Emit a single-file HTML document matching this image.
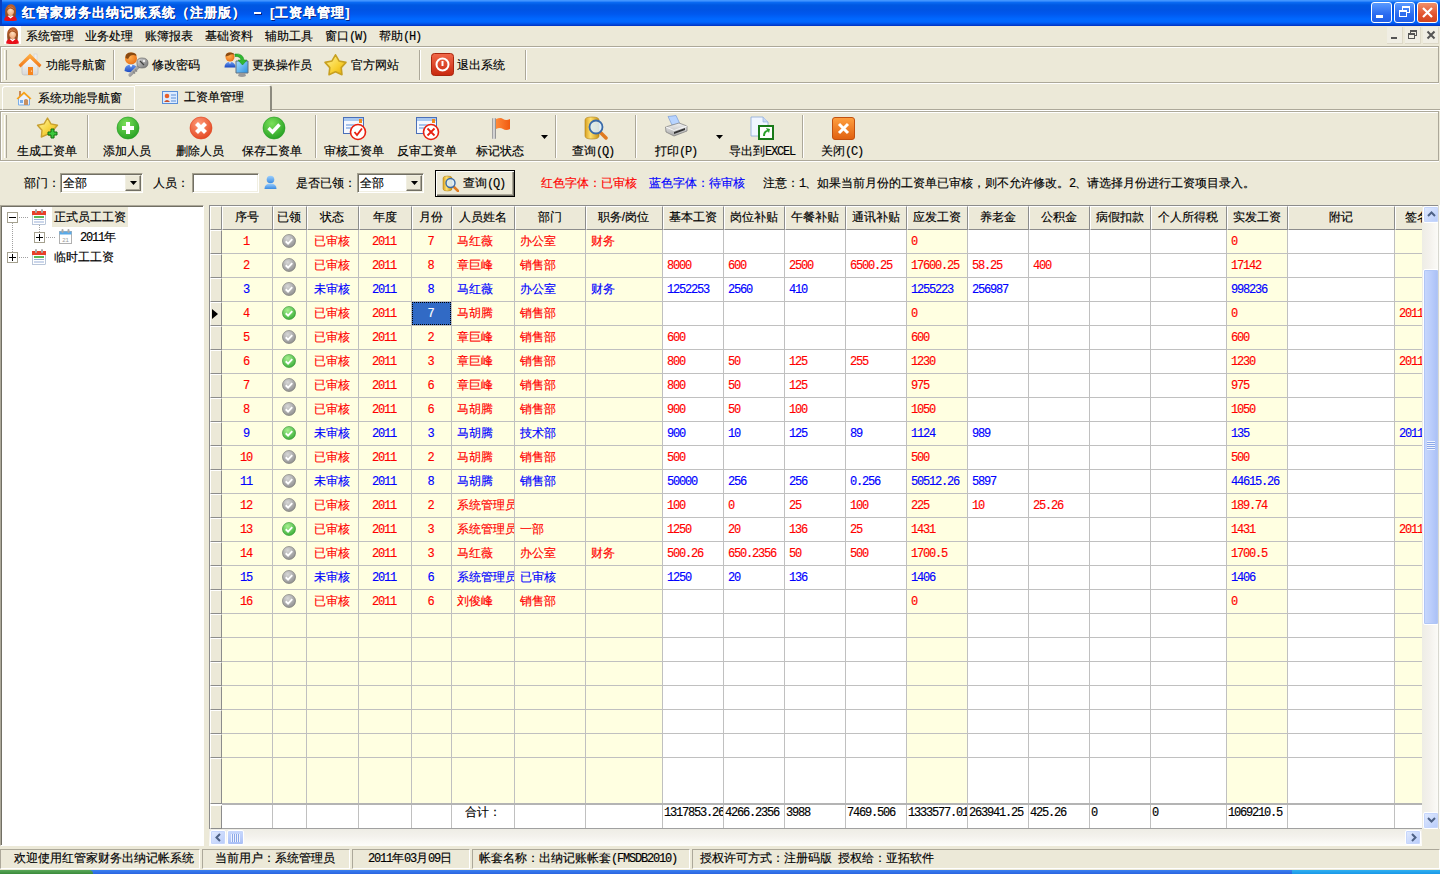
<!DOCTYPE html><html><head><meta charset="utf-8"><style>
*{box-sizing:border-box}
body{margin:0;width:1440px;height:874px;overflow:hidden;background:#ECE9D8;position:relative;font-family:"Liberation Sans",sans-serif;font-size:12px;color:#000}
.a{position:absolute}
.t{position:absolute;white-space:nowrap;line-height:12px;-webkit-text-stroke:0.15px currentColor}
.mono{font-family:"Liberation Mono",monospace;font-size:10px}
.n{font-family:"Liberation Mono",monospace;font-size:12px;letter-spacing:-1.2px}
</style></head><body>

<div class="a" style="left:0;top:0;width:1440px;height:26px;background:linear-gradient(180deg,#4A9CFF 0,#3A8EFF 1px,#0A6AF2 2.5px,#0058E2 5px,#0054E4 10px,#0058EE 14px,#0068FF 19px,#0066FF 22px,#0050E4 24px,#0030C0 26px)"></div>
<div class="a" style="left:0;top:0;width:2px;height:26px;background:#0A3FBF"></div>
<svg class="a" style="left:4px;top:4px" width="13" height="17" viewBox="0 0 13 17"><defs><linearGradient id="hair" x1="0" y1="0" x2="0" y2="1"><stop offset="0" stop-color="#C0602A"/><stop offset="1" stop-color="#8A4A20"/></linearGradient><radialGradient id="face" cx=".5" cy=".4" r=".6"><stop offset="0" stop-color="#FFE0C0"/><stop offset="1" stop-color="#F0A878"/></radialGradient></defs><path d="M1.5 13 Q0.5 6 2 3.5 Q4 0 7 0.3 Q11 0.5 11.8 4.5 Q12.5 8 11.5 13Z" fill="url(#hair)"/><ellipse cx="6.6" cy="7" rx="3.4" ry="4.2" fill="url(#face)"/><path d="M3 5 Q5 2 9 3.5 Q10.5 5 10.3 7 Q9 4.5 6 4.5 Q4 5 3 7Z" fill="url(#hair)"/><rect x="5.3" y="10" width="2.6" height="2.5" fill="#F0B088"/><path d="M0.2 16.5 Q0 12.5 4 12 L6.6 13.5 L9 12 Q13 12.5 12.8 16.5 Q6.5 17.5 0.2 16.5Z" fill="#E8101A"/><path d="M3.6 12 L6.6 14.5 L9.6 12 L8.5 11.5 L6.6 12.8 L4.7 11.5Z" fill="#fff"/></svg>
<div class="t" style="left:22px;top:6px;color:#fff;font-weight:bold;font-size:13px;line-height:14px;letter-spacing:1px;text-shadow:1px 1px 0 #0A1E7A">红管家财务出纳记账系统（注册版）</div>
<div class="a" style="left:254px;top:12px;width:7px;height:2px;background:#fff;box-shadow:1px 1px 0 #0A1E7A"></div>
<div class="t" style="left:270px;top:6px;color:#fff;font-weight:bold;font-size:13px;line-height:14px;letter-spacing:1px;text-shadow:1px 1px 0 #0A1E7A">[工资单管理]</div>
<div class="a" style="left:1371px;top:2px;width:21px;height:21px;border:1px solid #fff;border-radius:3px;background:linear-gradient(180deg,#5A9BFF,#2A6BF0 60%,#1F5FE8)"><div class="a" style="left:4px;top:12px;width:7px;height:3px;background:#fff"></div></div>
<div class="a" style="left:1394px;top:2px;width:21px;height:21px;border:1px solid #fff;border-radius:3px;background:linear-gradient(180deg,#5A9BFF,#2A6BF0 60%,#1F5FE8)"><div class="a" style="left:7px;top:3px;width:8px;height:7px;border:1px solid #fff;border-top-width:2px"></div><div class="a" style="left:4px;top:7px;width:8px;height:7px;border:1px solid #fff;border-top-width:2px;background:#2F6EEE"></div></div>
<div class="a" style="left:1417px;top:2px;width:21px;height:21px;border:1px solid #fff;border-radius:3px;background:linear-gradient(180deg,#F0906A,#E2542F 60%,#D24520)"><svg class="a" style="left:3px;top:3px" width="13" height="13"><path d="M2 2 L11 11 M11 2 L2 11" stroke="#fff" stroke-width="2.2"/></svg></div>
<div class="a" style="left:4px;top:26px;width:17px;height:18px;background:#fff"></div><svg class="a" style="left:6px;top:27px" width="13" height="17" viewBox="0 0 13 17"><defs><linearGradient id="hair" x1="0" y1="0" x2="0" y2="1"><stop offset="0" stop-color="#C0602A"/><stop offset="1" stop-color="#8A4A20"/></linearGradient><radialGradient id="face" cx=".5" cy=".4" r=".6"><stop offset="0" stop-color="#FFE0C0"/><stop offset="1" stop-color="#F0A878"/></radialGradient></defs><path d="M1.5 13 Q0.5 6 2 3.5 Q4 0 7 0.3 Q11 0.5 11.8 4.5 Q12.5 8 11.5 13Z" fill="url(#hair)"/><ellipse cx="6.6" cy="7" rx="3.4" ry="4.2" fill="url(#face)"/><path d="M3 5 Q5 2 9 3.5 Q10.5 5 10.3 7 Q9 4.5 6 4.5 Q4 5 3 7Z" fill="url(#hair)"/><rect x="5.3" y="10" width="2.6" height="2.5" fill="#F0B088"/><path d="M0.2 16.5 Q0 12.5 4 12 L6.6 13.5 L9 12 Q13 12.5 12.8 16.5 Q6.5 17.5 0.2 16.5Z" fill="#E8101A"/><path d="M3.6 12 L6.6 14.5 L9.6 12 L8.5 11.5 L6.6 12.8 L4.7 11.5Z" fill="#fff"/></svg>
<div class="t" style="left:26px;top:30px">系统管理</div>
<div class="t" style="left:85px;top:30px">业务处理</div>
<div class="t" style="left:145px;top:30px">账簿报表</div>
<div class="t" style="left:205px;top:30px">基础资料</div>
<div class="t" style="left:265px;top:30px">辅助工具</div>
<div class="t" style="left:325px;top:30px">窗口<span class="n">(W)</span></div>
<div class="t" style="left:379px;top:30px">帮助<span class="n">(H)</span></div>
<div class="a" style="left:1387px;top:27px;width:16px;height:17px;background:#F0EEE4;border-right:1px solid #DDD9C8;border-bottom:1px solid #DDD9C8"></div>
<div class="a" style="left:1405px;top:27px;width:16px;height:17px;background:#F0EEE4;border-right:1px solid #DDD9C8;border-bottom:1px solid #DDD9C8"></div>
<div class="a" style="left:1423px;top:27px;width:16px;height:17px;background:#F0EEE4;border-right:1px solid #DDD9C8;border-bottom:1px solid #DDD9C8"></div>
<div class="a" style="left:1391px;top:37px;width:6px;height:2px;background:#555"></div>
<div class="a" style="left:1410px;top:30px;width:7px;height:6px;border:1px solid #555;border-top-width:2px"></div><div class="a" style="left:1408px;top:33px;width:7px;height:6px;border:1px solid #555;border-top-width:2px;background:#F0EEE4"></div>
<svg class="a" style="left:1426px;top:30px" width="10" height="10"><path d="M1.5 1.5 L8.5 8.5 M8.5 1.5 L1.5 8.5" stroke="#555" stroke-width="2"/></svg>
<div class="a" style="left:0px;top:46px;width:1439px;height:37px;border:1px solid #ACA899;border-right-color:#ACA899;box-shadow:inset 1px 1px 0 #fff, 0 1px 0 #fff"></div>
<div class="a" style="left:4px;top:50px;width:3px;height:30px;border-left:1px solid #fff;border-right:1px solid #ACA899;"></div>
<div class="a" style="left:113px;top:50px;width:2px;height:30px;border-left:1px solid #ACA899;border-right:1px solid #fff"></div>
<div class="a" style="left:419px;top:50px;width:2px;height:30px;border-left:1px solid #ACA899;border-right:1px solid #fff"></div>
<div class="a" style="left:525px;top:50px;width:2px;height:30px;border-left:1px solid #ACA899;border-right:1px solid #fff"></div>
<svg class="a" style="left:18px;top:52px" width="24" height="24" viewBox="0 0 24 24"><defs><linearGradient id="hroof" x1="0" y1="0" x2="0" y2="1"><stop offset="0" stop-color="#FFB347"/><stop offset="1" stop-color="#F0751A"/></linearGradient><linearGradient id="hwall" x1="0" y1="0" x2="0" y2="1"><stop offset="0" stop-color="#fff"/><stop offset="1" stop-color="#D8D8D8"/></linearGradient></defs><rect x="16" y="2" width="3" height="6" fill="#eee" stroke="#ccc" stroke-width=".5"/><path d="M4 12 L12 4 L20 12 L20 21 Q20 23 18 23 L6 23 Q4 23 4 21 Z" fill="url(#hwall)" stroke="#bbb" stroke-width=".6"/><path d="M0.5 13 L12 1.5 L23.5 13 L21.5 15.5 L12 6.5 L2.5 15.5 Z" fill="url(#hroof)"/><rect x="10" y="15" width="5" height="8" fill="#F7851D"/><circle cx="13.5" cy="19" r=".6" fill="#fff"/></svg>
<div class="t" style="left:46px;top:59px">功能导航窗</div>
<svg class="a" style="left:124px;top:52px" width="25" height="25" viewBox="0 0 25 25"><defs><radialGradient id="hd" cx=".4" cy=".4" r=".7"><stop offset="0" stop-color="#FFB050"/><stop offset="1" stop-color="#E86A10"/></radialGradient><linearGradient id="bdy" x1="0" y1="0" x2="0" y2="1"><stop offset="0" stop-color="#6A9AF0"/><stop offset="1" stop-color="#1A48C0"/></linearGradient><linearGradient id="key" x1="0" y1="0" x2="1" y2="1"><stop offset="0" stop-color="#D8D8D8"/><stop offset="1" stop-color="#707070"/></linearGradient></defs><circle cx="7" cy="6.5" r="6" fill="url(#hd)"/><path d="M1.5 6 Q1 0.5 7 0.5 Q12.5 0.5 12.5 4 Q9 2 6 4 L4 7Z" fill="#8A4A10"/><path d="M0.5 19 Q0.5 12.5 7 12.5 Q12 12.5 13 16 L10 20 Q5 21 0.5 19Z" fill="url(#bdy)"/><path d="M5.5 12.8 L7 15.5 L8.5 12.8Z" fill="#fff"/><path d="M6 23 L15 14" stroke="url(#key)" stroke-width="3.2" stroke-linecap="round"/><path d="M9 19.5 L11 21.5 M11 17.5 L13 19.5" stroke="#888" stroke-width="1.5"/><path d="M13 10 Q13 6 18 6 Q24 6 24 11 Q24 16 18 16 Q13 16 13 12Z" fill="url(#key)" stroke="#666" stroke-width=".7"/><path d="M16 9 L20 13" stroke="#444" stroke-width="1.3"/><circle cx="20" cy="9" r="1.2" fill="#eee"/></svg>
<div class="t" style="left:152px;top:59px">修改密码</div>
<svg class="a" style="left:224px;top:52px" width="25" height="26" viewBox="0 0 25 26"><circle cx="6" cy="5" r="4.5" fill="url(#hd)"/><path d="M1.5 4.5 Q1.5 0.5 6 0.5 Q10.5 0.5 10.5 3 Q8 1.5 5 3.5Z" fill="#8A4A10"/><path d="M0.5 15.5 Q0.5 10 6 10 Q11.5 10 11.5 15.5Z" fill="url(#bdy)"/><path d="M5 10.2 L6 12 L7 10.2Z" fill="#fff"/><defs><linearGradient id="scr" x1="0" y1="0" x2="1" y2="1"><stop offset="0" stop-color="#A8E0FF"/><stop offset="1" stop-color="#2A90E0"/></linearGradient></defs><path d="M12 9 L24 9 L24 21 L12 21Z" fill="url(#scr)" stroke="#607080" stroke-width="1"/><path d="M15 21 L21 21 L22 24 Q18 26 14 24Z" fill="#9A9A9A"/><path d="M11 2 Q19 1 20 8 L23 8 L18.5 13 L14 8 L17 8 Q16 4 11 4.5Z" fill="#30B830" stroke="#1A8A1A" stroke-width=".5"/></svg>
<div class="t" style="left:252px;top:59px">更换操作员</div>
<svg class="a" style="left:323px;top:52px" width="25" height="25" viewBox="0 0 25 25"><defs><linearGradient id="stg" x1="0" y1="0" x2="1" y2="1"><stop offset="0" stop-color="#FFF6A0"/><stop offset=".6" stop-color="#F8D030"/><stop offset="1" stop-color="#E0A800"/></linearGradient></defs><polygon points="12.50,2.80 16.03,8.95 22.96,10.40 18.21,15.65 18.97,22.70 12.50,19.80 6.03,22.70 6.79,15.65 2.04,10.40 8.97,8.95" fill="url(#stg)" stroke="#C8A020" stroke-width="1.6" stroke-linejoin="round"/></svg>
<div class="t" style="left:351px;top:59px">官方网站</div>
<svg class="a" style="left:431px;top:53px" width="23" height="23" viewBox="0 0 23 23"><defs><linearGradient id="pwg" x1="0" y1="0" x2="0" y2="1"><stop offset="0" stop-color="#F26A4A"/><stop offset="1" stop-color="#C8280E"/></linearGradient></defs><rect x="0.5" y="0.5" width="22" height="22" rx="3" fill="url(#pwg)" stroke="#A8260E"/><circle cx="11.5" cy="11.5" r="6" fill="none" stroke="#fff" stroke-width="2"/><path d="M11.5 8 L11.5 13" stroke="#fff" stroke-width="2"/></svg>
<div class="t" style="left:457px;top:59px">退出系统</div>
<div class="a" style="left:0;top:109px;width:1440px;height:1px;background:#ACA899"></div>
<div class="a" style="left:0;top:110px;width:1440px;height:1px;background:#fff"></div>
<div class="a" style="left:2px;top:86px;width:133px;height:24px;border-left:1px solid #fff;border-top:1px solid #fff;border-radius:3px 0 0 0;border-bottom:1px solid #ACA899"></div>
<svg class="a" style="left:16px;top:90px" width="16" height="16" viewBox="0 0 16 16"><rect x="3" y="1" width="2" height="5" fill="#C98A5A"/><path d="M2.5 8 L8 3 L13.5 8 L13.5 15 L2.5 15Z" fill="#EAF2FF" stroke="#7AAEE8" stroke-width="1"/><path d="M0.5 8.5 L8 1.5 L15.5 8.5 L14 9.5 L8 4 L2 9.5Z" fill="#F7A21B"/><path d="M8 15 L8 10 Q10 8 12 10 L12 15Z" fill="#C99060"/><rect x="4" y="10" width="3" height="3" fill="#7AAEE8"/></svg>
<div class="t" style="left:38px;top:92px">系统功能导航窗</div>
<div class="a" style="left:135px;top:85px;width:137px;height:26px;background:#ECE9D8;border-top:1px solid #fff;border-right:2px solid #8C8A7E;border-radius:0 3px 0 0"></div>
<div class="a" style="left:134px;top:86px;width:1px;height:24px;background:#fff"></div>
<svg class="a" style="left:162px;top:90px" width="16" height="15" viewBox="0 0 16 15"><rect x="0.5" y="1.5" width="15" height="12" fill="#DDEBFF" stroke="#5A8FD8"/><circle cx="5" cy="6" r="2.3" fill="#E8602A"/><path d="M2 12 Q5 8 8 12Z" fill="#C8502A"/><path d="M9 5 H14 M9 8 H14 M9 11 H14" stroke="#5A8FD8" stroke-width="1"/></svg>
<div class="t" style="left:184px;top:91px">工资单管理</div>
<div class="a" style="left:0px;top:111px;width:1439px;height:50px;border:1px solid #ACA899;border-right-color:#ACA899;box-shadow:inset 1px 1px 0 #fff, 0 1px 0 #fff"></div>
<div class="a" style="left:4px;top:115px;width:3px;height:43px;border-left:1px solid #fff;border-right:1px solid #ACA899;"></div>
<div class="a" style="left:87px;top:115px;width:2px;height:43px;border-left:1px solid #ACA899;border-right:1px solid #fff"></div>
<div class="a" style="left:315px;top:115px;width:2px;height:43px;border-left:1px solid #ACA899;border-right:1px solid #fff"></div>
<div class="a" style="left:555px;top:115px;width:2px;height:43px;border-left:1px solid #ACA899;border-right:1px solid #fff"></div>
<div class="a" style="left:635px;top:115px;width:2px;height:43px;border-left:1px solid #ACA899;border-right:1px solid #fff"></div>
<div class="a" style="left:802px;top:115px;width:2px;height:43px;border-left:1px solid #ACA899;border-right:1px solid #fff"></div>
<svg class="a" style="left:36px;top:116px" width="24" height="24" viewBox="0 0 24 24"><defs><linearGradient id="stg2" x1="0" y1="0" x2="1" y2="1"><stop offset="0" stop-color="#FFF8B0"/><stop offset=".5" stop-color="#F8D848"/><stop offset="1" stop-color="#E0B010"/></linearGradient></defs><polygon points="11.50,2.00 14.91,7.81 21.49,9.26 17.02,14.29 17.67,20.99 11.50,18.30 5.33,20.99 5.98,14.29 1.51,9.26 8.09,7.81" fill="url(#stg2)" stroke="#C8A030" stroke-width="1.4" stroke-linejoin="round"/><path d="M15 13 H18 V16 H21 V19 H18 V22 H15 V19 H12 V16 H15Z" fill="#3CC83C" stroke="#107010" stroke-width="1"/></svg>
<div class="t" style="left:-13px;top:145px;width:120px;text-align:center">生成工资单</div>
<svg class="a" style="left:116px;top:116px" width="24" height="24" viewBox="0 0 24 24"><defs><radialGradient id="g7BE05A" cx=".4" cy=".3" r=".8"><stop offset="0" stop-color="#7BE05A"/><stop offset="1" stop-color="#1E9A1E"/></radialGradient></defs><circle cx="12" cy="12" r="11" fill="url(#g7BE05A)" stroke="#1E9A1E" stroke-width=".6"/><path d="M12 6 V18 M6 12 H18" stroke="#fff" stroke-width="4"/></svg>
<div class="t" style="left:67px;top:145px;width:120px;text-align:center">添加人员</div>
<svg class="a" style="left:189px;top:116px" width="24" height="24" viewBox="0 0 24 24"><defs><radialGradient id="gFF9A78" cx=".4" cy=".3" r=".8"><stop offset="0" stop-color="#FF9A78"/><stop offset="1" stop-color="#E0401A"/></radialGradient></defs><circle cx="12" cy="12" r="11" fill="url(#gFF9A78)" stroke="#E0401A" stroke-width=".6"/><path d="M7.5 7.5 L16.5 16.5 M16.5 7.5 L7.5 16.5" stroke="#fff" stroke-width="4.2"/></svg>
<div class="t" style="left:140px;top:145px;width:120px;text-align:center">删除人员</div>
<svg class="a" style="left:262px;top:116px" width="24" height="24" viewBox="0 0 24 24"><defs><radialGradient id="g7BE05A" cx=".4" cy=".3" r=".8"><stop offset="0" stop-color="#7BE05A"/><stop offset="1" stop-color="#1E9A1E"/></radialGradient></defs><circle cx="12" cy="12" r="11" fill="url(#g7BE05A)" stroke="#1E9A1E" stroke-width=".6"/><path d="M6.5 12 L10.5 16 L17.5 8.5" fill="none" stroke="#fff" stroke-width="3.4"/></svg>
<div class="t" style="left:212px;top:145px;width:120px;text-align:center">保存工资单</div>
<svg class="a" style="left:342px;top:116px" width="25" height="25" viewBox="0 0 25 25"><rect x="1.5" y="1.5" width="20" height="16" fill="#F4F8FF" stroke="#4A6FB8"/><rect x="2" y="2" width="19" height="3" fill="#A8C8F0"/><path d="M4 9 H12 M4 12 H10" stroke="#5A8FD8"/><rect x="17" y="3" width="3" height="4" fill="#F28A1A"/><circle cx="16" cy="16" r="7.5" fill="#fff" stroke="#E82010" stroke-width="1.6"/><path d="M12.5 16 L15 19 L20 12.5" fill="none" stroke="#E82010" stroke-width="1.8"/></svg>
<div class="t" style="left:294px;top:145px;width:120px;text-align:center">审核工资单</div>
<svg class="a" style="left:415px;top:116px" width="25" height="25" viewBox="0 0 25 25"><rect x="1.5" y="1.5" width="20" height="16" fill="#F4F8FF" stroke="#4A6FB8"/><rect x="2" y="2" width="19" height="3" fill="#A8C8F0"/><path d="M4 9 H12 M4 12 H10" stroke="#5A8FD8"/><rect x="17" y="3" width="3" height="4" fill="#F28A1A"/><circle cx="16" cy="16" r="7.5" fill="#fff" stroke="#E82010" stroke-width="1.6"/><path d="M12.5 12.5 L19.5 19.5 M19.5 12.5 L12.5 19.5" stroke="#E82010" stroke-width="1.8"/></svg>
<div class="t" style="left:367px;top:145px;width:120px;text-align:center">反审工资单</div>
<svg class="a" style="left:491px;top:117px" width="20" height="22" viewBox="0 0 20 22"><defs><linearGradient id="pole" x1="0" y1="0" x2="1" y2="0"><stop offset="0" stop-color="#888"/><stop offset=".5" stop-color="#eee"/><stop offset="1" stop-color="#777"/></linearGradient><linearGradient id="flg" x1="0" y1="0" x2="1" y2="0"><stop offset="0" stop-color="#FF8A3A"/><stop offset="1" stop-color="#F05A10"/></linearGradient></defs><rect x="1" y="1" width="4" height="21" rx="1" fill="url(#pole)"/><path d="M5 2 Q10 0 12 2 Q15 4 19 2 L19 12 Q15 14 12 12 Q9 10 5 12Z" fill="url(#flg)"/></svg>
<div class="t" style="left:440px;top:145px;width:120px;text-align:center">标记状态</div>
<svg class="a" style="left:541px;top:135px" width="7" height="4"><path d="M0 0 H7 L3.5 4Z" fill="#000"/></svg>
<svg class="a" style="left:584px;top:116px" width="24" height="24" viewBox="0 0 24 24"><defs><linearGradient id="cyl" x1="0" y1="0" x2="1" y2="0"><stop offset="0" stop-color="#D8A020"/><stop offset=".4" stop-color="#FFE070"/><stop offset="1" stop-color="#C89010"/></linearGradient></defs><path d="M1 4 Q1 1 8 1 Q15 1 15 4 L15 20 Q15 23 8 23 Q1 23 1 20Z" fill="url(#cyl)" stroke="#B08010" stroke-width=".6"/><path d="M16 16 L22 22" stroke="#E07A20" stroke-width="3.5" stroke-linecap="round"/><circle cx="12" cy="11" r="6.5" fill="#DDF0FF" fill-opacity=".85" stroke="#3A6AA8" stroke-width="1.8"/></svg>
<div class="t" style="left:533px;top:145px;width:120px;text-align:center">查询<span class="n">(Q)</span></div>
<svg class="a" style="left:665px;top:115px" width="23" height="22" viewBox="0 0 23 22"><defs><linearGradient id="prb" x1="0" y1="0" x2="0" y2="1"><stop offset="0" stop-color="#F4F4F4"/><stop offset="1" stop-color="#A8A8A8"/></linearGradient></defs><path d="M3 1.5 L11 0.5 L15 9 L7 10Z" fill="#B8D4FF" stroke="#6A90D0" stroke-width=".6"/><path d="M0.5 12 L14 8 L22 11 L22 16 L9 21 L1 17Z" fill="url(#prb)" stroke="#7A7A7A" stroke-width=".7"/><path d="M1 12 L9 15.5 L22 11" fill="none" stroke="#fff" stroke-width=".8"/><path d="M9 17 L20 13 L20 15 L9 19Z" fill="#333"/></svg>
<div class="t" style="left:616px;top:145px;width:120px;text-align:center">打印<span class="n">(P)</span></div>
<svg class="a" style="left:716px;top:135px" width="7" height="4"><path d="M0 0 H7 L3.5 4Z" fill="#000"/></svg>
<svg class="a" style="left:750px;top:116px" width="24" height="24" viewBox="0 0 24 24"><path d="M1 1 L13 1 L18 6 L18 20 L1 20Z" fill="#F0F6FF" stroke="#8AA8D8" stroke-width=".8"/><path d="M13 1 L13 6 L18 6" fill="#C8DAF5" stroke="#8AA8D8" stroke-width=".6"/><rect x="9" y="10" width="14" height="13" fill="#fff" stroke="#1A7A1A" stroke-width="2"/><path d="M13 20 Q13 15 17 14 L16 12 L20 13 L19 17 L18 15.5 Q15 16 15 20Z" fill="#2AA02A"/></svg>
<div class="t" style="left:702px;top:145px;width:120px;text-align:center">导出到<span class="n">EXCEL</span></div>
<svg class="a" style="left:832px;top:117px" width="23" height="23" viewBox="0 0 23 23"><defs><linearGradient id="clg" x1="0" y1="0" x2="0" y2="1"><stop offset="0" stop-color="#FFA040"/><stop offset="1" stop-color="#E06010"/></linearGradient></defs><rect x="0.5" y="0.5" width="22" height="22" rx="2.5" fill="url(#clg)" stroke="#C05010"/><path d="M7 7 L16 16 M16 7 L7 16" stroke="#fff" stroke-width="3"/></svg>
<div class="t" style="left:782px;top:145px;width:120px;text-align:center">关闭<span class="n">(C)</span></div>
<div class="t" style="left:24px;top:177px">部门：</div>
<div class="a" style="left:60px;top:173px;width:83px;height:20px;background:#fff;border:1px solid;border-color:#A5A18F #fff #fff #A5A18F;box-shadow:inset 1px 1px 0 #716F64, inset -1px -1px 0 #F1EFE2"></div><div class="t" style="left:63px;top:177px">全部</div><div class="a" style="left:125px;top:175px;width:16px;height:16px;background:#ECE9D8;border:1px solid;border-color:#F1EFE2 #716F64 #716F64 #F1EFE2;box-shadow:inset -1px -1px 0 #ACA899"></div><svg class="a" style="left:130px;top:181px" width="7" height="4"><path d="M0 0 H7 L3.5 4Z" fill="#000"/></svg>
<div class="t" style="left:153px;top:177px">人员：</div>
<div class="a" style="left:192px;top:173px;width:67px;height:20px;background:#fff;border:1px solid;border-color:#A5A18F #fff #fff #A5A18F;box-shadow:inset 1px 1px 0 #716F64, inset -1px -1px 0 #F1EFE2"></div>
<svg class="a" style="left:264px;top:175px" width="13" height="14" viewBox="0 0 13 14"><defs><linearGradient id="psg" x1="0" y1="0" x2="0" y2="1"><stop offset="0" stop-color="#9CD0FF"/><stop offset="1" stop-color="#3A8AE0"/></linearGradient></defs><circle cx="6.5" cy="4.5" r="3.8" fill="url(#psg)"/><path d="M0.5 14 Q0.5 8.5 6.5 8.5 Q12.5 8.5 12.5 14Z" fill="url(#psg)"/></svg>
<div class="t" style="left:296px;top:177px">是否已领：</div>
<div class="a" style="left:357px;top:173px;width:67px;height:20px;background:#fff;border:1px solid;border-color:#A5A18F #fff #fff #A5A18F;box-shadow:inset 1px 1px 0 #716F64, inset -1px -1px 0 #F1EFE2"></div><div class="t" style="left:360px;top:177px">全部</div><div class="a" style="left:406px;top:175px;width:16px;height:16px;background:#ECE9D8;border:1px solid;border-color:#F1EFE2 #716F64 #716F64 #F1EFE2;box-shadow:inset -1px -1px 0 #ACA899"></div><svg class="a" style="left:411px;top:181px" width="7" height="4"><path d="M0 0 H7 L3.5 4Z" fill="#000"/></svg>
<div class="a" style="left:435px;top:170px;width:80px;height:27px;border:1px solid #000;background:#ECE9D8;box-shadow:inset 1px 1px 0 #fff, inset -1px -1px 0 #716F64, inset -2px -2px 0 #ACA899"></div>
<svg class="a" style="left:442px;top:175px" width="17" height="17" viewBox="0 0 17 17"><path d="M1 3 Q1 1 5.5 1 Q10 1 10 3 L10 14 Q10 16 5.5 16 Q1 16 1 14Z" fill="url(#cyl)" stroke="#B08010" stroke-width=".5"/><path d="M11 11 L16 16" stroke="#E07A20" stroke-width="2.5" stroke-linecap="round"/><circle cx="8.5" cy="8" r="4.5" fill="#DDF0FF" fill-opacity=".85" stroke="#3A6AA8" stroke-width="1.4"/></svg>
<div class="t" style="left:463px;top:177px">查询<span class="n">(Q)</span></div>
<div class="t" style="left:541px;top:177px;color:#FF0000">红色字体：已审核</div>
<div class="t" style="left:649px;top:177px;color:#0000FF">蓝色字体：待审核</div>
<div class="t" style="left:763px;top:177px">注意：<span class="n">1</span>、如果当前月份的工资单已审核，则不允许修改。<span class="n">2</span>、请选择月份进行工资项目录入。</div>
<div class="a" style="left:0;top:205px;width:204px;height:641px;background:#fff;border:1px solid;border-color:#ACA899 #fff #fff #ACA899;box-shadow:inset 1px 1px 0 #716F64"></div>
<div class="a" style="left:12px;top:223px;width:1px;height:29px;background:repeating-linear-gradient(180deg,#A0A0A0 0 1px,transparent 1px 2px)"></div>
<div class="a" style="left:7px;top:212px;width:11px;height:11px;border:1px solid #A5A18F;background:#fff"></div><div class="a" style="left:9px;top:217px;width:7px;height:1px;background:#000"></div>
<div class="a" style="left:19px;top:217px;width:9px;height:1px;background:repeating-linear-gradient(90deg,#A0A0A0 0 1px,transparent 1px 2px)"></div>
<svg class="a" style="left:32px;top:209px" width="14" height="16" viewBox="0 0 14 16"><rect x="0.5" y="2.5" width="13" height="13" fill="#fff" stroke="#8AA0C0" stroke-width=".6"/><rect x="0" y="2" width="14" height="4" fill="#E8402A"/><rect x="2" y="7" width="10" height="2" fill="#58B858"/><path d="M2 10.5 H12 M2 13 H12" stroke="#9AB0D8" stroke-width="1.2"/><rect x="3" y="0" width="2" height="4" rx="1" fill="#aaa"/><rect x="9" y="0" width="2" height="4" rx="1" fill="#aaa"/></svg>
<div class="a" style="left:52px;top:207px;width:76px;height:20px;background:#ECE9D8"></div>
<div class="t" style="left:54px;top:211px">正式员工工资</div>
<div class="a" style="left:39px;top:225px;width:1px;height:7px;background:repeating-linear-gradient(180deg,#A0A0A0 0 1px,transparent 1px 2px)"></div>
<div class="a" style="left:34px;top:232px;width:11px;height:11px;border:1px solid #A5A18F;background:#fff"></div><div class="a" style="left:36px;top:237px;width:7px;height:1px;background:#000"></div><div class="a" style="left:39px;top:234px;width:1px;height:7px;background:#000"></div>
<div class="a" style="left:46px;top:237px;width:9px;height:1px;background:repeating-linear-gradient(90deg,#A0A0A0 0 1px,transparent 1px 2px)"></div>
<svg class="a" style="left:59px;top:229px" width="13" height="15" viewBox="0 0 13 15"><rect x="0.5" y="2.5" width="12" height="12" fill="#fff" stroke="#B0B0B0"/><rect x="0.5" y="2.5" width="12" height="3" fill="#5AAAE8"/><rect x="2.5" y="0" width="2" height="4" rx="1" fill="#aaa"/><rect x="8.5" y="0" width="2" height="4" rx="1" fill="#aaa"/><text x="6.5" y="12.5" font-size="6" text-anchor="middle" fill="#999" font-family="Liberation Sans">21</text></svg>
<div class="t" style="left:80px;top:231px"><span class="n">2011</span>年</div>
<div class="a" style="left:7px;top:252px;width:11px;height:11px;border:1px solid #A5A18F;background:#fff"></div><div class="a" style="left:9px;top:257px;width:7px;height:1px;background:#000"></div><div class="a" style="left:12px;top:254px;width:1px;height:7px;background:#000"></div>
<div class="a" style="left:19px;top:257px;width:9px;height:1px;background:repeating-linear-gradient(90deg,#A0A0A0 0 1px,transparent 1px 2px)"></div>
<svg class="a" style="left:32px;top:249px" width="14" height="16" viewBox="0 0 14 16"><rect x="0.5" y="2.5" width="13" height="13" fill="#fff" stroke="#8AA0C0" stroke-width=".6"/><rect x="0" y="2" width="14" height="4" fill="#E8402A"/><rect x="2" y="7" width="10" height="2" fill="#58B858"/><path d="M2 10.5 H12 M2 13 H12" stroke="#9AB0D8" stroke-width="1.2"/><rect x="3" y="0" width="2" height="4" rx="1" fill="#aaa"/><rect x="9" y="0" width="2" height="4" rx="1" fill="#aaa"/></svg>
<div class="t" style="left:54px;top:251px">临时工工资</div>
<div class="a" style="left:209px;top:205px;width:1213px;height:624px;overflow:hidden;background:#fff">
<div class="a" style="left:0;top:0;width:1213px;height:1px;background:#8C8C8C"></div>
<div class="a" style="left:0;top:0;width:1px;height:624px;background:#8C8C8C"></div>
<div class="a" style="left:13px;top:25px;width:50px;height:573px;background:#FFFFE1"></div>
<div class="a" style="left:64px;top:25px;width:33px;height:573px;background:#FFFFE1"></div>
<div class="a" style="left:98px;top:25px;width:51px;height:573px;background:#FFFFE1"></div>
<div class="a" style="left:150px;top:25px;width:52px;height:573px;background:#FFFFE1"></div>
<div class="a" style="left:203px;top:25px;width:39px;height:573px;background:#FFFFE1"></div>
<div class="a" style="left:243px;top:25px;width:62px;height:573px;background:#FFFFE1"></div>
<div class="a" style="left:306px;top:25px;width:70px;height:573px;background:#FFFFE1"></div>
<div class="a" style="left:377px;top:25px;width:76px;height:573px;background:#FFFFE1"></div>
<div class="a" style="left:454px;top:25px;width:60px;height:573px;background:#fff"></div>
<div class="a" style="left:515px;top:25px;width:60px;height:573px;background:#fff"></div>
<div class="a" style="left:576px;top:25px;width:60px;height:573px;background:#fff"></div>
<div class="a" style="left:637px;top:25px;width:60px;height:573px;background:#fff"></div>
<div class="a" style="left:698px;top:25px;width:60px;height:573px;background:#FFFFE1"></div>
<div class="a" style="left:759px;top:25px;width:60px;height:573px;background:#fff"></div>
<div class="a" style="left:820px;top:25px;width:60px;height:573px;background:#fff"></div>
<div class="a" style="left:881px;top:25px;width:60px;height:573px;background:#fff"></div>
<div class="a" style="left:942px;top:25px;width:75px;height:573px;background:#fff"></div>
<div class="a" style="left:1018px;top:25px;width:60px;height:573px;background:#FFFFE1"></div>
<div class="a" style="left:1079px;top:25px;width:106px;height:573px;background:#fff"></div>
<div class="a" style="left:1186px;top:25px;width:45px;height:573px;background:#FFFFE1"></div>
<div class="a" style="left:63px;top:24px;width:1px;height:600px;background:#C0C0C0"></div>
<div class="a" style="left:97px;top:24px;width:1px;height:600px;background:#C0C0C0"></div>
<div class="a" style="left:149px;top:24px;width:1px;height:600px;background:#C0C0C0"></div>
<div class="a" style="left:202px;top:24px;width:1px;height:600px;background:#C0C0C0"></div>
<div class="a" style="left:242px;top:24px;width:1px;height:600px;background:#C0C0C0"></div>
<div class="a" style="left:305px;top:24px;width:1px;height:600px;background:#C0C0C0"></div>
<div class="a" style="left:376px;top:24px;width:1px;height:600px;background:#C0C0C0"></div>
<div class="a" style="left:453px;top:24px;width:1px;height:600px;background:#C0C0C0"></div>
<div class="a" style="left:514px;top:24px;width:1px;height:600px;background:#C0C0C0"></div>
<div class="a" style="left:575px;top:24px;width:1px;height:600px;background:#C0C0C0"></div>
<div class="a" style="left:636px;top:24px;width:1px;height:600px;background:#C0C0C0"></div>
<div class="a" style="left:697px;top:24px;width:1px;height:600px;background:#C0C0C0"></div>
<div class="a" style="left:758px;top:24px;width:1px;height:600px;background:#C0C0C0"></div>
<div class="a" style="left:819px;top:24px;width:1px;height:600px;background:#C0C0C0"></div>
<div class="a" style="left:880px;top:24px;width:1px;height:600px;background:#C0C0C0"></div>
<div class="a" style="left:941px;top:24px;width:1px;height:600px;background:#C0C0C0"></div>
<div class="a" style="left:1017px;top:24px;width:1px;height:600px;background:#C0C0C0"></div>
<div class="a" style="left:1078px;top:24px;width:1px;height:600px;background:#C0C0C0"></div>
<div class="a" style="left:1185px;top:24px;width:1px;height:600px;background:#C0C0C0"></div>
<div class="a" style="left:1231px;top:24px;width:1px;height:600px;background:#C0C0C0"></div>
<div class="a" style="left:13px;top:48px;width:1200px;height:1px;background:#C0C0C0"></div>
<div class="a" style="left:13px;top:72px;width:1200px;height:1px;background:#C0C0C0"></div>
<div class="a" style="left:13px;top:96px;width:1200px;height:1px;background:#C0C0C0"></div>
<div class="a" style="left:13px;top:120px;width:1200px;height:1px;background:#C0C0C0"></div>
<div class="a" style="left:13px;top:144px;width:1200px;height:1px;background:#C0C0C0"></div>
<div class="a" style="left:13px;top:168px;width:1200px;height:1px;background:#C0C0C0"></div>
<div class="a" style="left:13px;top:192px;width:1200px;height:1px;background:#C0C0C0"></div>
<div class="a" style="left:13px;top:216px;width:1200px;height:1px;background:#C0C0C0"></div>
<div class="a" style="left:13px;top:240px;width:1200px;height:1px;background:#C0C0C0"></div>
<div class="a" style="left:13px;top:264px;width:1200px;height:1px;background:#C0C0C0"></div>
<div class="a" style="left:13px;top:288px;width:1200px;height:1px;background:#C0C0C0"></div>
<div class="a" style="left:13px;top:312px;width:1200px;height:1px;background:#C0C0C0"></div>
<div class="a" style="left:13px;top:336px;width:1200px;height:1px;background:#C0C0C0"></div>
<div class="a" style="left:13px;top:360px;width:1200px;height:1px;background:#C0C0C0"></div>
<div class="a" style="left:13px;top:384px;width:1200px;height:1px;background:#C0C0C0"></div>
<div class="a" style="left:13px;top:408px;width:1200px;height:1px;background:#C0C0C0"></div>
<div class="a" style="left:13px;top:432px;width:1200px;height:1px;background:#C0C0C0"></div>
<div class="a" style="left:13px;top:456px;width:1200px;height:1px;background:#C0C0C0"></div>
<div class="a" style="left:13px;top:480px;width:1200px;height:1px;background:#C0C0C0"></div>
<div class="a" style="left:13px;top:504px;width:1200px;height:1px;background:#C0C0C0"></div>
<div class="a" style="left:13px;top:528px;width:1200px;height:1px;background:#C0C0C0"></div>
<div class="a" style="left:13px;top:552px;width:1200px;height:1px;background:#C0C0C0"></div>
<div class="a" style="left:13px;top:598px;width:1200px;height:2px;background:#B4B4B4"></div>
<div class="a" style="left:13px;top:600px;width:1200px;height:23px;background:#fff"></div>
<div class="a" style="left:63px;top:600px;width:1px;height:23px;background:#C0C0C0"></div>
<div class="a" style="left:97px;top:600px;width:1px;height:23px;background:#C0C0C0"></div>
<div class="a" style="left:149px;top:600px;width:1px;height:23px;background:#C0C0C0"></div>
<div class="a" style="left:202px;top:600px;width:1px;height:23px;background:#C0C0C0"></div>
<div class="a" style="left:242px;top:600px;width:1px;height:23px;background:#C0C0C0"></div>
<div class="a" style="left:305px;top:600px;width:1px;height:23px;background:#C0C0C0"></div>
<div class="a" style="left:376px;top:600px;width:1px;height:23px;background:#C0C0C0"></div>
<div class="a" style="left:453px;top:600px;width:1px;height:23px;background:#C0C0C0"></div>
<div class="a" style="left:514px;top:600px;width:1px;height:23px;background:#C0C0C0"></div>
<div class="a" style="left:575px;top:600px;width:1px;height:23px;background:#C0C0C0"></div>
<div class="a" style="left:636px;top:600px;width:1px;height:23px;background:#C0C0C0"></div>
<div class="a" style="left:697px;top:600px;width:1px;height:23px;background:#C0C0C0"></div>
<div class="a" style="left:758px;top:600px;width:1px;height:23px;background:#C0C0C0"></div>
<div class="a" style="left:819px;top:600px;width:1px;height:23px;background:#C0C0C0"></div>
<div class="a" style="left:880px;top:600px;width:1px;height:23px;background:#C0C0C0"></div>
<div class="a" style="left:941px;top:600px;width:1px;height:23px;background:#C0C0C0"></div>
<div class="a" style="left:1017px;top:600px;width:1px;height:23px;background:#C0C0C0"></div>
<div class="a" style="left:1078px;top:600px;width:1px;height:23px;background:#C0C0C0"></div>
<div class="a" style="left:1185px;top:600px;width:1px;height:23px;background:#C0C0C0"></div>
<div class="a" style="left:1231px;top:600px;width:1px;height:23px;background:#C0C0C0"></div>
<div class="a" style="left:13px;top:623px;width:1200px;height:1px;background:#A0A0A0"></div>
<div class="a" style="left:1px;top:1px;width:12px;height:24px;background:#ECE9D8;border-left:1px solid #fff;border-top:1px solid #fff;border-right:1px solid #8C8C8C;border-bottom:1px solid #8C8C8C"></div>
<div class="a" style="left:13px;top:1px;width:51px;height:24px;background:#ECE9D8;border-left:1px solid #fff;border-top:1px solid #fff;border-right:1px solid #8C8C8C;border-bottom:1px solid #8C8C8C"></div><div class="t" style="left:12px;top:6px;width:51px;text-align:center">序号</div>
<div class="a" style="left:64px;top:1px;width:34px;height:24px;background:#ECE9D8;border-left:1px solid #fff;border-top:1px solid #fff;border-right:1px solid #8C8C8C;border-bottom:1px solid #8C8C8C"></div><div class="t" style="left:63px;top:6px;width:34px;text-align:center">已领</div>
<div class="a" style="left:98px;top:1px;width:52px;height:24px;background:#ECE9D8;border-left:1px solid #fff;border-top:1px solid #fff;border-right:1px solid #8C8C8C;border-bottom:1px solid #8C8C8C"></div><div class="t" style="left:97px;top:6px;width:52px;text-align:center">状态</div>
<div class="a" style="left:150px;top:1px;width:53px;height:24px;background:#ECE9D8;border-left:1px solid #fff;border-top:1px solid #fff;border-right:1px solid #8C8C8C;border-bottom:1px solid #8C8C8C"></div><div class="t" style="left:149px;top:6px;width:53px;text-align:center">年度</div>
<div class="a" style="left:203px;top:1px;width:40px;height:24px;background:#ECE9D8;border-left:1px solid #fff;border-top:1px solid #fff;border-right:1px solid #8C8C8C;border-bottom:1px solid #8C8C8C"></div><div class="t" style="left:202px;top:6px;width:40px;text-align:center">月份</div>
<div class="a" style="left:243px;top:1px;width:63px;height:24px;background:#ECE9D8;border-left:1px solid #fff;border-top:1px solid #fff;border-right:1px solid #8C8C8C;border-bottom:1px solid #8C8C8C"></div><div class="t" style="left:242px;top:6px;width:63px;text-align:center">人员姓名</div>
<div class="a" style="left:306px;top:1px;width:71px;height:24px;background:#ECE9D8;border-left:1px solid #fff;border-top:1px solid #fff;border-right:1px solid #8C8C8C;border-bottom:1px solid #8C8C8C"></div><div class="t" style="left:305px;top:6px;width:71px;text-align:center">部门</div>
<div class="a" style="left:377px;top:1px;width:77px;height:24px;background:#ECE9D8;border-left:1px solid #fff;border-top:1px solid #fff;border-right:1px solid #8C8C8C;border-bottom:1px solid #8C8C8C"></div><div class="t" style="left:376px;top:6px;width:77px;text-align:center">职务/岗位</div>
<div class="a" style="left:454px;top:1px;width:61px;height:24px;background:#ECE9D8;border-left:1px solid #fff;border-top:1px solid #fff;border-right:1px solid #8C8C8C;border-bottom:1px solid #8C8C8C"></div><div class="t" style="left:453px;top:6px;width:61px;text-align:center">基本工资</div>
<div class="a" style="left:515px;top:1px;width:61px;height:24px;background:#ECE9D8;border-left:1px solid #fff;border-top:1px solid #fff;border-right:1px solid #8C8C8C;border-bottom:1px solid #8C8C8C"></div><div class="t" style="left:514px;top:6px;width:61px;text-align:center">岗位补贴</div>
<div class="a" style="left:576px;top:1px;width:61px;height:24px;background:#ECE9D8;border-left:1px solid #fff;border-top:1px solid #fff;border-right:1px solid #8C8C8C;border-bottom:1px solid #8C8C8C"></div><div class="t" style="left:575px;top:6px;width:61px;text-align:center">午餐补贴</div>
<div class="a" style="left:637px;top:1px;width:61px;height:24px;background:#ECE9D8;border-left:1px solid #fff;border-top:1px solid #fff;border-right:1px solid #8C8C8C;border-bottom:1px solid #8C8C8C"></div><div class="t" style="left:636px;top:6px;width:61px;text-align:center">通讯补贴</div>
<div class="a" style="left:698px;top:1px;width:61px;height:24px;background:#ECE9D8;border-left:1px solid #fff;border-top:1px solid #fff;border-right:1px solid #8C8C8C;border-bottom:1px solid #8C8C8C"></div><div class="t" style="left:697px;top:6px;width:61px;text-align:center">应发工资</div>
<div class="a" style="left:759px;top:1px;width:61px;height:24px;background:#ECE9D8;border-left:1px solid #fff;border-top:1px solid #fff;border-right:1px solid #8C8C8C;border-bottom:1px solid #8C8C8C"></div><div class="t" style="left:758px;top:6px;width:61px;text-align:center">养老金</div>
<div class="a" style="left:820px;top:1px;width:61px;height:24px;background:#ECE9D8;border-left:1px solid #fff;border-top:1px solid #fff;border-right:1px solid #8C8C8C;border-bottom:1px solid #8C8C8C"></div><div class="t" style="left:819px;top:6px;width:61px;text-align:center">公积金</div>
<div class="a" style="left:881px;top:1px;width:61px;height:24px;background:#ECE9D8;border-left:1px solid #fff;border-top:1px solid #fff;border-right:1px solid #8C8C8C;border-bottom:1px solid #8C8C8C"></div><div class="t" style="left:880px;top:6px;width:61px;text-align:center">病假扣款</div>
<div class="a" style="left:942px;top:1px;width:76px;height:24px;background:#ECE9D8;border-left:1px solid #fff;border-top:1px solid #fff;border-right:1px solid #8C8C8C;border-bottom:1px solid #8C8C8C"></div><div class="t" style="left:941px;top:6px;width:76px;text-align:center">个人所得税</div>
<div class="a" style="left:1018px;top:1px;width:61px;height:24px;background:#ECE9D8;border-left:1px solid #fff;border-top:1px solid #fff;border-right:1px solid #8C8C8C;border-bottom:1px solid #8C8C8C"></div><div class="t" style="left:1017px;top:6px;width:61px;text-align:center">实发工资</div>
<div class="a" style="left:1079px;top:1px;width:107px;height:24px;background:#ECE9D8;border-left:1px solid #fff;border-top:1px solid #fff;border-right:1px solid #8C8C8C;border-bottom:1px solid #8C8C8C"></div><div class="t" style="left:1078px;top:6px;width:107px;text-align:center">附记</div>
<div class="a" style="left:1186px;top:1px;width:46px;height:24px;background:#ECE9D8;border-left:1px solid #fff;border-top:1px solid #fff;border-right:1px solid #8C8C8C;border-bottom:1px solid #8C8C8C"></div><div class="t" style="left:1185px;top:6px;width:46px;text-align:center">签名</div>
<div class="a" style="left:1px;top:25px;width:12px;height:24px;background:#ECE9D8;border-left:1px solid #fff;border-top:1px solid #fff;border-right:1px solid #8C8C8C;border-bottom:1px solid #8C8C8C"></div>
<div class="a" style="left:1px;top:49px;width:12px;height:24px;background:#ECE9D8;border-left:1px solid #fff;border-top:1px solid #fff;border-right:1px solid #8C8C8C;border-bottom:1px solid #8C8C8C"></div>
<div class="a" style="left:1px;top:73px;width:12px;height:24px;background:#ECE9D8;border-left:1px solid #fff;border-top:1px solid #fff;border-right:1px solid #8C8C8C;border-bottom:1px solid #8C8C8C"></div>
<div class="a" style="left:1px;top:97px;width:12px;height:24px;background:#ECE9D8;border-left:1px solid #fff;border-top:1px solid #fff;border-right:1px solid #8C8C8C;border-bottom:1px solid #8C8C8C"></div>
<div class="a" style="left:1px;top:121px;width:12px;height:24px;background:#ECE9D8;border-left:1px solid #fff;border-top:1px solid #fff;border-right:1px solid #8C8C8C;border-bottom:1px solid #8C8C8C"></div>
<div class="a" style="left:1px;top:145px;width:12px;height:24px;background:#ECE9D8;border-left:1px solid #fff;border-top:1px solid #fff;border-right:1px solid #8C8C8C;border-bottom:1px solid #8C8C8C"></div>
<div class="a" style="left:1px;top:169px;width:12px;height:24px;background:#ECE9D8;border-left:1px solid #fff;border-top:1px solid #fff;border-right:1px solid #8C8C8C;border-bottom:1px solid #8C8C8C"></div>
<div class="a" style="left:1px;top:193px;width:12px;height:24px;background:#ECE9D8;border-left:1px solid #fff;border-top:1px solid #fff;border-right:1px solid #8C8C8C;border-bottom:1px solid #8C8C8C"></div>
<div class="a" style="left:1px;top:217px;width:12px;height:24px;background:#ECE9D8;border-left:1px solid #fff;border-top:1px solid #fff;border-right:1px solid #8C8C8C;border-bottom:1px solid #8C8C8C"></div>
<div class="a" style="left:1px;top:241px;width:12px;height:24px;background:#ECE9D8;border-left:1px solid #fff;border-top:1px solid #fff;border-right:1px solid #8C8C8C;border-bottom:1px solid #8C8C8C"></div>
<div class="a" style="left:1px;top:265px;width:12px;height:24px;background:#ECE9D8;border-left:1px solid #fff;border-top:1px solid #fff;border-right:1px solid #8C8C8C;border-bottom:1px solid #8C8C8C"></div>
<div class="a" style="left:1px;top:289px;width:12px;height:24px;background:#ECE9D8;border-left:1px solid #fff;border-top:1px solid #fff;border-right:1px solid #8C8C8C;border-bottom:1px solid #8C8C8C"></div>
<div class="a" style="left:1px;top:313px;width:12px;height:24px;background:#ECE9D8;border-left:1px solid #fff;border-top:1px solid #fff;border-right:1px solid #8C8C8C;border-bottom:1px solid #8C8C8C"></div>
<div class="a" style="left:1px;top:337px;width:12px;height:24px;background:#ECE9D8;border-left:1px solid #fff;border-top:1px solid #fff;border-right:1px solid #8C8C8C;border-bottom:1px solid #8C8C8C"></div>
<div class="a" style="left:1px;top:361px;width:12px;height:24px;background:#ECE9D8;border-left:1px solid #fff;border-top:1px solid #fff;border-right:1px solid #8C8C8C;border-bottom:1px solid #8C8C8C"></div>
<div class="a" style="left:1px;top:385px;width:12px;height:24px;background:#ECE9D8;border-left:1px solid #fff;border-top:1px solid #fff;border-right:1px solid #8C8C8C;border-bottom:1px solid #8C8C8C"></div>
<div class="a" style="left:1px;top:409px;width:12px;height:24px;background:#ECE9D8;border-left:1px solid #fff;border-top:1px solid #fff;border-right:1px solid #8C8C8C;border-bottom:1px solid #8C8C8C"></div>
<div class="a" style="left:1px;top:433px;width:12px;height:24px;background:#ECE9D8;border-left:1px solid #fff;border-top:1px solid #fff;border-right:1px solid #8C8C8C;border-bottom:1px solid #8C8C8C"></div>
<div class="a" style="left:1px;top:457px;width:12px;height:24px;background:#ECE9D8;border-left:1px solid #fff;border-top:1px solid #fff;border-right:1px solid #8C8C8C;border-bottom:1px solid #8C8C8C"></div>
<div class="a" style="left:1px;top:481px;width:12px;height:24px;background:#ECE9D8;border-left:1px solid #fff;border-top:1px solid #fff;border-right:1px solid #8C8C8C;border-bottom:1px solid #8C8C8C"></div>
<div class="a" style="left:1px;top:505px;width:12px;height:24px;background:#ECE9D8;border-left:1px solid #fff;border-top:1px solid #fff;border-right:1px solid #8C8C8C;border-bottom:1px solid #8C8C8C"></div>
<div class="a" style="left:1px;top:529px;width:12px;height:24px;background:#ECE9D8;border-left:1px solid #fff;border-top:1px solid #fff;border-right:1px solid #8C8C8C;border-bottom:1px solid #8C8C8C"></div>
<div class="a" style="left:1px;top:553px;width:12px;height:46px;background:#ECE9D8;border-left:1px solid #fff;border-top:1px solid #fff;border-right:1px solid #8C8C8C;border-bottom:1px solid #8C8C8C"></div>
<div class="a" style="left:1px;top:600px;width:12px;height:24px;background:#ECE9D8;border-left:1px solid #fff;border-top:1px solid #fff;border-right:1px solid #8C8C8C;border-bottom:1px solid #8C8C8C"></div>
<svg class="a" style="left:3px;top:104px" width="6" height="10"><path d="M0 0 L6 5 L0 10Z" fill="#000"/></svg>
<div class="t" style="left:12px;top:30px;width:50px;text-align:center;color:#FF0000"><span class="n">1</span></div>
<svg class="a" style="left:73px;top:29px" width="14" height="14" viewBox="0 0 15 15"><defs><radialGradient id="gcg" cx=".4" cy=".3" r=".8"><stop offset="0" stop-color="#D8D8D8"/><stop offset="1" stop-color="#888"/></radialGradient></defs><circle cx="7.5" cy="7.5" r="7" fill="url(#gcg)" stroke="#6A6A6A" stroke-width=".6"/><path d="M4 7.8 L6.5 10.3 L11 5.5" fill="none" stroke="#fff" stroke-width="2"/></svg>
<div class="t" style="left:97px;top:30px;width:51px;text-align:center;color:#FF0000">已审核</div>
<div class="t" style="left:149px;top:30px;width:52px;text-align:center;color:#FF0000"><span class="n">2011</span></div>
<div class="t" style="left:202px;top:30px;width:39px;text-align:center;color:#FF0000"><span class="n">7</span></div>
<div class="t" style="left:243px;top:30px;width:62px;overflow:hidden;color:#FF0000;padding-left:5px">马红薇</div>
<div class="t" style="left:306px;top:30px;width:70px;overflow:hidden;color:#FF0000;padding-left:5px">办公室</div>
<div class="t" style="left:377px;top:30px;width:76px;overflow:hidden;color:#FF0000;padding-left:5px">财务</div>
<div class="t" style="left:698px;top:30px;width:60px;overflow:hidden;color:#FF0000;padding-left:4px"><span class="n">0</span></div>
<div class="t" style="left:1018px;top:30px;width:60px;overflow:hidden;color:#FF0000;padding-left:4px"><span class="n">0</span></div>
<div class="t" style="left:12px;top:54px;width:50px;text-align:center;color:#FF0000"><span class="n">2</span></div>
<svg class="a" style="left:73px;top:53px" width="14" height="14" viewBox="0 0 15 15"><defs><radialGradient id="gcg" cx=".4" cy=".3" r=".8"><stop offset="0" stop-color="#D8D8D8"/><stop offset="1" stop-color="#888"/></radialGradient></defs><circle cx="7.5" cy="7.5" r="7" fill="url(#gcg)" stroke="#6A6A6A" stroke-width=".6"/><path d="M4 7.8 L6.5 10.3 L11 5.5" fill="none" stroke="#fff" stroke-width="2"/></svg>
<div class="t" style="left:97px;top:54px;width:51px;text-align:center;color:#FF0000">已审核</div>
<div class="t" style="left:149px;top:54px;width:52px;text-align:center;color:#FF0000"><span class="n">2011</span></div>
<div class="t" style="left:202px;top:54px;width:39px;text-align:center;color:#FF0000"><span class="n">8</span></div>
<div class="t" style="left:243px;top:54px;width:62px;overflow:hidden;color:#FF0000;padding-left:5px">章巨峰</div>
<div class="t" style="left:306px;top:54px;width:70px;overflow:hidden;color:#FF0000;padding-left:5px">销售部</div>
<div class="t" style="left:377px;top:54px;width:76px;overflow:hidden;color:#FF0000;padding-left:5px"></div>
<div class="t" style="left:454px;top:54px;width:60px;overflow:hidden;color:#FF0000;padding-left:4px"><span class="n">8000</span></div>
<div class="t" style="left:515px;top:54px;width:60px;overflow:hidden;color:#FF0000;padding-left:4px"><span class="n">600</span></div>
<div class="t" style="left:576px;top:54px;width:60px;overflow:hidden;color:#FF0000;padding-left:4px"><span class="n">2500</span></div>
<div class="t" style="left:637px;top:54px;width:60px;overflow:hidden;color:#FF0000;padding-left:4px"><span class="n">6500.25</span></div>
<div class="t" style="left:698px;top:54px;width:60px;overflow:hidden;color:#FF0000;padding-left:4px"><span class="n">17600.25</span></div>
<div class="t" style="left:759px;top:54px;width:60px;overflow:hidden;color:#FF0000;padding-left:4px"><span class="n">58.25</span></div>
<div class="t" style="left:820px;top:54px;width:60px;overflow:hidden;color:#FF0000;padding-left:4px"><span class="n">400</span></div>
<div class="t" style="left:1018px;top:54px;width:60px;overflow:hidden;color:#FF0000;padding-left:4px"><span class="n">17142</span></div>
<div class="t" style="left:12px;top:78px;width:50px;text-align:center;color:#0000FF"><span class="n">3</span></div>
<svg class="a" style="left:73px;top:77px" width="14" height="14" viewBox="0 0 15 15"><defs><radialGradient id="gcg" cx=".4" cy=".3" r=".8"><stop offset="0" stop-color="#D8D8D8"/><stop offset="1" stop-color="#888"/></radialGradient></defs><circle cx="7.5" cy="7.5" r="7" fill="url(#gcg)" stroke="#6A6A6A" stroke-width=".6"/><path d="M4 7.8 L6.5 10.3 L11 5.5" fill="none" stroke="#fff" stroke-width="2"/></svg>
<div class="t" style="left:97px;top:78px;width:51px;text-align:center;color:#0000FF">未审核</div>
<div class="t" style="left:149px;top:78px;width:52px;text-align:center;color:#0000FF"><span class="n">2011</span></div>
<div class="t" style="left:202px;top:78px;width:39px;text-align:center;color:#0000FF"><span class="n">8</span></div>
<div class="t" style="left:243px;top:78px;width:62px;overflow:hidden;color:#0000FF;padding-left:5px">马红薇</div>
<div class="t" style="left:306px;top:78px;width:70px;overflow:hidden;color:#0000FF;padding-left:5px">办公室</div>
<div class="t" style="left:377px;top:78px;width:76px;overflow:hidden;color:#0000FF;padding-left:5px">财务</div>
<div class="t" style="left:454px;top:78px;width:60px;overflow:hidden;color:#0000FF;padding-left:4px"><span class="n">1252253</span></div>
<div class="t" style="left:515px;top:78px;width:60px;overflow:hidden;color:#0000FF;padding-left:4px"><span class="n">2560</span></div>
<div class="t" style="left:576px;top:78px;width:60px;overflow:hidden;color:#0000FF;padding-left:4px"><span class="n">410</span></div>
<div class="t" style="left:698px;top:78px;width:60px;overflow:hidden;color:#0000FF;padding-left:4px"><span class="n">1255223</span></div>
<div class="t" style="left:759px;top:78px;width:60px;overflow:hidden;color:#0000FF;padding-left:4px"><span class="n">256987</span></div>
<div class="t" style="left:1018px;top:78px;width:60px;overflow:hidden;color:#0000FF;padding-left:4px"><span class="n">998236</span></div>
<div class="t" style="left:12px;top:102px;width:50px;text-align:center;color:#FF0000"><span class="n">4</span></div>
<svg class="a" style="left:73px;top:101px" width="14" height="14" viewBox="0 0 15 15"><defs><radialGradient id="gck" cx=".4" cy=".3" r=".8"><stop offset="0" stop-color="#A8F090"/><stop offset="1" stop-color="#30A830"/></radialGradient></defs><circle cx="7.5" cy="7.5" r="7" fill="url(#gck)" stroke="#2A8A2A" stroke-width=".6"/><path d="M4 7.8 L6.5 10.3 L11 5.5" fill="none" stroke="#fff" stroke-width="2"/></svg>
<div class="t" style="left:97px;top:102px;width:51px;text-align:center;color:#FF0000">已审核</div>
<div class="t" style="left:149px;top:102px;width:52px;text-align:center;color:#FF0000"><span class="n">2011</span></div>
<div class="a" style="left:203px;top:97px;width:39px;height:23px;background:#316AC5;border:1px dotted #000"></div>
<div class="t" style="left:202px;top:102px;width:39px;text-align:center;color:#fff"><span class="n">7</span></div>
<div class="t" style="left:243px;top:102px;width:62px;overflow:hidden;color:#FF0000;padding-left:5px">马胡腾</div>
<div class="t" style="left:306px;top:102px;width:70px;overflow:hidden;color:#FF0000;padding-left:5px">销售部</div>
<div class="t" style="left:377px;top:102px;width:76px;overflow:hidden;color:#FF0000;padding-left:5px"></div>
<div class="t" style="left:698px;top:102px;width:60px;overflow:hidden;color:#FF0000;padding-left:4px"><span class="n">0</span></div>
<div class="t" style="left:1018px;top:102px;width:60px;overflow:hidden;color:#FF0000;padding-left:4px"><span class="n">0</span></div>
<div class="t" style="left:1186px;top:102px;width:45px;overflow:hidden;color:#FF0000;padding-left:4px"><span class="n">2011</span></div>
<div class="t" style="left:12px;top:126px;width:50px;text-align:center;color:#FF0000"><span class="n">5</span></div>
<svg class="a" style="left:73px;top:125px" width="14" height="14" viewBox="0 0 15 15"><defs><radialGradient id="gcg" cx=".4" cy=".3" r=".8"><stop offset="0" stop-color="#D8D8D8"/><stop offset="1" stop-color="#888"/></radialGradient></defs><circle cx="7.5" cy="7.5" r="7" fill="url(#gcg)" stroke="#6A6A6A" stroke-width=".6"/><path d="M4 7.8 L6.5 10.3 L11 5.5" fill="none" stroke="#fff" stroke-width="2"/></svg>
<div class="t" style="left:97px;top:126px;width:51px;text-align:center;color:#FF0000">已审核</div>
<div class="t" style="left:149px;top:126px;width:52px;text-align:center;color:#FF0000"><span class="n">2011</span></div>
<div class="t" style="left:202px;top:126px;width:39px;text-align:center;color:#FF0000"><span class="n">2</span></div>
<div class="t" style="left:243px;top:126px;width:62px;overflow:hidden;color:#FF0000;padding-left:5px">章巨峰</div>
<div class="t" style="left:306px;top:126px;width:70px;overflow:hidden;color:#FF0000;padding-left:5px">销售部</div>
<div class="t" style="left:377px;top:126px;width:76px;overflow:hidden;color:#FF0000;padding-left:5px"></div>
<div class="t" style="left:454px;top:126px;width:60px;overflow:hidden;color:#FF0000;padding-left:4px"><span class="n">600</span></div>
<div class="t" style="left:698px;top:126px;width:60px;overflow:hidden;color:#FF0000;padding-left:4px"><span class="n">600</span></div>
<div class="t" style="left:1018px;top:126px;width:60px;overflow:hidden;color:#FF0000;padding-left:4px"><span class="n">600</span></div>
<div class="t" style="left:12px;top:150px;width:50px;text-align:center;color:#FF0000"><span class="n">6</span></div>
<svg class="a" style="left:73px;top:149px" width="14" height="14" viewBox="0 0 15 15"><defs><radialGradient id="gck" cx=".4" cy=".3" r=".8"><stop offset="0" stop-color="#A8F090"/><stop offset="1" stop-color="#30A830"/></radialGradient></defs><circle cx="7.5" cy="7.5" r="7" fill="url(#gck)" stroke="#2A8A2A" stroke-width=".6"/><path d="M4 7.8 L6.5 10.3 L11 5.5" fill="none" stroke="#fff" stroke-width="2"/></svg>
<div class="t" style="left:97px;top:150px;width:51px;text-align:center;color:#FF0000">已审核</div>
<div class="t" style="left:149px;top:150px;width:52px;text-align:center;color:#FF0000"><span class="n">2011</span></div>
<div class="t" style="left:202px;top:150px;width:39px;text-align:center;color:#FF0000"><span class="n">3</span></div>
<div class="t" style="left:243px;top:150px;width:62px;overflow:hidden;color:#FF0000;padding-left:5px">章巨峰</div>
<div class="t" style="left:306px;top:150px;width:70px;overflow:hidden;color:#FF0000;padding-left:5px">销售部</div>
<div class="t" style="left:377px;top:150px;width:76px;overflow:hidden;color:#FF0000;padding-left:5px"></div>
<div class="t" style="left:454px;top:150px;width:60px;overflow:hidden;color:#FF0000;padding-left:4px"><span class="n">800</span></div>
<div class="t" style="left:515px;top:150px;width:60px;overflow:hidden;color:#FF0000;padding-left:4px"><span class="n">50</span></div>
<div class="t" style="left:576px;top:150px;width:60px;overflow:hidden;color:#FF0000;padding-left:4px"><span class="n">125</span></div>
<div class="t" style="left:637px;top:150px;width:60px;overflow:hidden;color:#FF0000;padding-left:4px"><span class="n">255</span></div>
<div class="t" style="left:698px;top:150px;width:60px;overflow:hidden;color:#FF0000;padding-left:4px"><span class="n">1230</span></div>
<div class="t" style="left:1018px;top:150px;width:60px;overflow:hidden;color:#FF0000;padding-left:4px"><span class="n">1230</span></div>
<div class="t" style="left:1186px;top:150px;width:45px;overflow:hidden;color:#FF0000;padding-left:4px"><span class="n">2011</span></div>
<div class="t" style="left:12px;top:174px;width:50px;text-align:center;color:#FF0000"><span class="n">7</span></div>
<svg class="a" style="left:73px;top:173px" width="14" height="14" viewBox="0 0 15 15"><defs><radialGradient id="gcg" cx=".4" cy=".3" r=".8"><stop offset="0" stop-color="#D8D8D8"/><stop offset="1" stop-color="#888"/></radialGradient></defs><circle cx="7.5" cy="7.5" r="7" fill="url(#gcg)" stroke="#6A6A6A" stroke-width=".6"/><path d="M4 7.8 L6.5 10.3 L11 5.5" fill="none" stroke="#fff" stroke-width="2"/></svg>
<div class="t" style="left:97px;top:174px;width:51px;text-align:center;color:#FF0000">已审核</div>
<div class="t" style="left:149px;top:174px;width:52px;text-align:center;color:#FF0000"><span class="n">2011</span></div>
<div class="t" style="left:202px;top:174px;width:39px;text-align:center;color:#FF0000"><span class="n">6</span></div>
<div class="t" style="left:243px;top:174px;width:62px;overflow:hidden;color:#FF0000;padding-left:5px">章巨峰</div>
<div class="t" style="left:306px;top:174px;width:70px;overflow:hidden;color:#FF0000;padding-left:5px">销售部</div>
<div class="t" style="left:377px;top:174px;width:76px;overflow:hidden;color:#FF0000;padding-left:5px"></div>
<div class="t" style="left:454px;top:174px;width:60px;overflow:hidden;color:#FF0000;padding-left:4px"><span class="n">800</span></div>
<div class="t" style="left:515px;top:174px;width:60px;overflow:hidden;color:#FF0000;padding-left:4px"><span class="n">50</span></div>
<div class="t" style="left:576px;top:174px;width:60px;overflow:hidden;color:#FF0000;padding-left:4px"><span class="n">125</span></div>
<div class="t" style="left:698px;top:174px;width:60px;overflow:hidden;color:#FF0000;padding-left:4px"><span class="n">975</span></div>
<div class="t" style="left:1018px;top:174px;width:60px;overflow:hidden;color:#FF0000;padding-left:4px"><span class="n">975</span></div>
<div class="t" style="left:12px;top:198px;width:50px;text-align:center;color:#FF0000"><span class="n">8</span></div>
<svg class="a" style="left:73px;top:197px" width="14" height="14" viewBox="0 0 15 15"><defs><radialGradient id="gcg" cx=".4" cy=".3" r=".8"><stop offset="0" stop-color="#D8D8D8"/><stop offset="1" stop-color="#888"/></radialGradient></defs><circle cx="7.5" cy="7.5" r="7" fill="url(#gcg)" stroke="#6A6A6A" stroke-width=".6"/><path d="M4 7.8 L6.5 10.3 L11 5.5" fill="none" stroke="#fff" stroke-width="2"/></svg>
<div class="t" style="left:97px;top:198px;width:51px;text-align:center;color:#FF0000">已审核</div>
<div class="t" style="left:149px;top:198px;width:52px;text-align:center;color:#FF0000"><span class="n">2011</span></div>
<div class="t" style="left:202px;top:198px;width:39px;text-align:center;color:#FF0000"><span class="n">6</span></div>
<div class="t" style="left:243px;top:198px;width:62px;overflow:hidden;color:#FF0000;padding-left:5px">马胡腾</div>
<div class="t" style="left:306px;top:198px;width:70px;overflow:hidden;color:#FF0000;padding-left:5px">销售部</div>
<div class="t" style="left:377px;top:198px;width:76px;overflow:hidden;color:#FF0000;padding-left:5px"></div>
<div class="t" style="left:454px;top:198px;width:60px;overflow:hidden;color:#FF0000;padding-left:4px"><span class="n">900</span></div>
<div class="t" style="left:515px;top:198px;width:60px;overflow:hidden;color:#FF0000;padding-left:4px"><span class="n">50</span></div>
<div class="t" style="left:576px;top:198px;width:60px;overflow:hidden;color:#FF0000;padding-left:4px"><span class="n">100</span></div>
<div class="t" style="left:698px;top:198px;width:60px;overflow:hidden;color:#FF0000;padding-left:4px"><span class="n">1050</span></div>
<div class="t" style="left:1018px;top:198px;width:60px;overflow:hidden;color:#FF0000;padding-left:4px"><span class="n">1050</span></div>
<div class="t" style="left:12px;top:222px;width:50px;text-align:center;color:#0000FF"><span class="n">9</span></div>
<svg class="a" style="left:73px;top:221px" width="14" height="14" viewBox="0 0 15 15"><defs><radialGradient id="gck" cx=".4" cy=".3" r=".8"><stop offset="0" stop-color="#A8F090"/><stop offset="1" stop-color="#30A830"/></radialGradient></defs><circle cx="7.5" cy="7.5" r="7" fill="url(#gck)" stroke="#2A8A2A" stroke-width=".6"/><path d="M4 7.8 L6.5 10.3 L11 5.5" fill="none" stroke="#fff" stroke-width="2"/></svg>
<div class="t" style="left:97px;top:222px;width:51px;text-align:center;color:#0000FF">未审核</div>
<div class="t" style="left:149px;top:222px;width:52px;text-align:center;color:#0000FF"><span class="n">2011</span></div>
<div class="t" style="left:202px;top:222px;width:39px;text-align:center;color:#0000FF"><span class="n">3</span></div>
<div class="t" style="left:243px;top:222px;width:62px;overflow:hidden;color:#0000FF;padding-left:5px">马胡腾</div>
<div class="t" style="left:306px;top:222px;width:70px;overflow:hidden;color:#0000FF;padding-left:5px">技术部</div>
<div class="t" style="left:377px;top:222px;width:76px;overflow:hidden;color:#0000FF;padding-left:5px"></div>
<div class="t" style="left:454px;top:222px;width:60px;overflow:hidden;color:#0000FF;padding-left:4px"><span class="n">900</span></div>
<div class="t" style="left:515px;top:222px;width:60px;overflow:hidden;color:#0000FF;padding-left:4px"><span class="n">10</span></div>
<div class="t" style="left:576px;top:222px;width:60px;overflow:hidden;color:#0000FF;padding-left:4px"><span class="n">125</span></div>
<div class="t" style="left:637px;top:222px;width:60px;overflow:hidden;color:#0000FF;padding-left:4px"><span class="n">89</span></div>
<div class="t" style="left:698px;top:222px;width:60px;overflow:hidden;color:#0000FF;padding-left:4px"><span class="n">1124</span></div>
<div class="t" style="left:759px;top:222px;width:60px;overflow:hidden;color:#0000FF;padding-left:4px"><span class="n">989</span></div>
<div class="t" style="left:1018px;top:222px;width:60px;overflow:hidden;color:#0000FF;padding-left:4px"><span class="n">135</span></div>
<div class="t" style="left:1186px;top:222px;width:45px;overflow:hidden;color:#0000FF;padding-left:4px"><span class="n">2011</span></div>
<div class="t" style="left:12px;top:246px;width:50px;text-align:center;color:#FF0000"><span class="n">10</span></div>
<svg class="a" style="left:73px;top:245px" width="14" height="14" viewBox="0 0 15 15"><defs><radialGradient id="gcg" cx=".4" cy=".3" r=".8"><stop offset="0" stop-color="#D8D8D8"/><stop offset="1" stop-color="#888"/></radialGradient></defs><circle cx="7.5" cy="7.5" r="7" fill="url(#gcg)" stroke="#6A6A6A" stroke-width=".6"/><path d="M4 7.8 L6.5 10.3 L11 5.5" fill="none" stroke="#fff" stroke-width="2"/></svg>
<div class="t" style="left:97px;top:246px;width:51px;text-align:center;color:#FF0000">已审核</div>
<div class="t" style="left:149px;top:246px;width:52px;text-align:center;color:#FF0000"><span class="n">2011</span></div>
<div class="t" style="left:202px;top:246px;width:39px;text-align:center;color:#FF0000"><span class="n">2</span></div>
<div class="t" style="left:243px;top:246px;width:62px;overflow:hidden;color:#FF0000;padding-left:5px">马胡腾</div>
<div class="t" style="left:306px;top:246px;width:70px;overflow:hidden;color:#FF0000;padding-left:5px">销售部</div>
<div class="t" style="left:377px;top:246px;width:76px;overflow:hidden;color:#FF0000;padding-left:5px"></div>
<div class="t" style="left:454px;top:246px;width:60px;overflow:hidden;color:#FF0000;padding-left:4px"><span class="n">500</span></div>
<div class="t" style="left:698px;top:246px;width:60px;overflow:hidden;color:#FF0000;padding-left:4px"><span class="n">500</span></div>
<div class="t" style="left:1018px;top:246px;width:60px;overflow:hidden;color:#FF0000;padding-left:4px"><span class="n">500</span></div>
<div class="t" style="left:12px;top:270px;width:50px;text-align:center;color:#0000FF"><span class="n">11</span></div>
<svg class="a" style="left:73px;top:269px" width="14" height="14" viewBox="0 0 15 15"><defs><radialGradient id="gcg" cx=".4" cy=".3" r=".8"><stop offset="0" stop-color="#D8D8D8"/><stop offset="1" stop-color="#888"/></radialGradient></defs><circle cx="7.5" cy="7.5" r="7" fill="url(#gcg)" stroke="#6A6A6A" stroke-width=".6"/><path d="M4 7.8 L6.5 10.3 L11 5.5" fill="none" stroke="#fff" stroke-width="2"/></svg>
<div class="t" style="left:97px;top:270px;width:51px;text-align:center;color:#0000FF">未审核</div>
<div class="t" style="left:149px;top:270px;width:52px;text-align:center;color:#0000FF"><span class="n">2011</span></div>
<div class="t" style="left:202px;top:270px;width:39px;text-align:center;color:#0000FF"><span class="n">8</span></div>
<div class="t" style="left:243px;top:270px;width:62px;overflow:hidden;color:#0000FF;padding-left:5px">马胡腾</div>
<div class="t" style="left:306px;top:270px;width:70px;overflow:hidden;color:#0000FF;padding-left:5px">销售部</div>
<div class="t" style="left:377px;top:270px;width:76px;overflow:hidden;color:#0000FF;padding-left:5px"></div>
<div class="t" style="left:454px;top:270px;width:60px;overflow:hidden;color:#0000FF;padding-left:4px"><span class="n">50000</span></div>
<div class="t" style="left:515px;top:270px;width:60px;overflow:hidden;color:#0000FF;padding-left:4px"><span class="n">256</span></div>
<div class="t" style="left:576px;top:270px;width:60px;overflow:hidden;color:#0000FF;padding-left:4px"><span class="n">256</span></div>
<div class="t" style="left:637px;top:270px;width:60px;overflow:hidden;color:#0000FF;padding-left:4px"><span class="n">0.256</span></div>
<div class="t" style="left:698px;top:270px;width:60px;overflow:hidden;color:#0000FF;padding-left:4px"><span class="n">50512.26</span></div>
<div class="t" style="left:759px;top:270px;width:60px;overflow:hidden;color:#0000FF;padding-left:4px"><span class="n">5897</span></div>
<div class="t" style="left:1018px;top:270px;width:60px;overflow:hidden;color:#0000FF;padding-left:4px"><span class="n">44615.26</span></div>
<div class="t" style="left:12px;top:294px;width:50px;text-align:center;color:#FF0000"><span class="n">12</span></div>
<svg class="a" style="left:73px;top:293px" width="14" height="14" viewBox="0 0 15 15"><defs><radialGradient id="gcg" cx=".4" cy=".3" r=".8"><stop offset="0" stop-color="#D8D8D8"/><stop offset="1" stop-color="#888"/></radialGradient></defs><circle cx="7.5" cy="7.5" r="7" fill="url(#gcg)" stroke="#6A6A6A" stroke-width=".6"/><path d="M4 7.8 L6.5 10.3 L11 5.5" fill="none" stroke="#fff" stroke-width="2"/></svg>
<div class="t" style="left:97px;top:294px;width:51px;text-align:center;color:#FF0000">已审核</div>
<div class="t" style="left:149px;top:294px;width:52px;text-align:center;color:#FF0000"><span class="n">2011</span></div>
<div class="t" style="left:202px;top:294px;width:39px;text-align:center;color:#FF0000"><span class="n">2</span></div>
<div class="t" style="left:243px;top:294px;width:62px;overflow:hidden;color:#FF0000;padding-left:5px">系统管理员</div>
<div class="t" style="left:306px;top:294px;width:70px;overflow:hidden;color:#FF0000;padding-left:5px"></div>
<div class="t" style="left:377px;top:294px;width:76px;overflow:hidden;color:#FF0000;padding-left:5px"></div>
<div class="t" style="left:454px;top:294px;width:60px;overflow:hidden;color:#FF0000;padding-left:4px"><span class="n">100</span></div>
<div class="t" style="left:515px;top:294px;width:60px;overflow:hidden;color:#FF0000;padding-left:4px"><span class="n">0</span></div>
<div class="t" style="left:576px;top:294px;width:60px;overflow:hidden;color:#FF0000;padding-left:4px"><span class="n">25</span></div>
<div class="t" style="left:637px;top:294px;width:60px;overflow:hidden;color:#FF0000;padding-left:4px"><span class="n">100</span></div>
<div class="t" style="left:698px;top:294px;width:60px;overflow:hidden;color:#FF0000;padding-left:4px"><span class="n">225</span></div>
<div class="t" style="left:759px;top:294px;width:60px;overflow:hidden;color:#FF0000;padding-left:4px"><span class="n">10</span></div>
<div class="t" style="left:820px;top:294px;width:60px;overflow:hidden;color:#FF0000;padding-left:4px"><span class="n">25.26</span></div>
<div class="t" style="left:1018px;top:294px;width:60px;overflow:hidden;color:#FF0000;padding-left:4px"><span class="n">189.74</span></div>
<div class="t" style="left:12px;top:318px;width:50px;text-align:center;color:#FF0000"><span class="n">13</span></div>
<svg class="a" style="left:73px;top:317px" width="14" height="14" viewBox="0 0 15 15"><defs><radialGradient id="gck" cx=".4" cy=".3" r=".8"><stop offset="0" stop-color="#A8F090"/><stop offset="1" stop-color="#30A830"/></radialGradient></defs><circle cx="7.5" cy="7.5" r="7" fill="url(#gck)" stroke="#2A8A2A" stroke-width=".6"/><path d="M4 7.8 L6.5 10.3 L11 5.5" fill="none" stroke="#fff" stroke-width="2"/></svg>
<div class="t" style="left:97px;top:318px;width:51px;text-align:center;color:#FF0000">已审核</div>
<div class="t" style="left:149px;top:318px;width:52px;text-align:center;color:#FF0000"><span class="n">2011</span></div>
<div class="t" style="left:202px;top:318px;width:39px;text-align:center;color:#FF0000"><span class="n">3</span></div>
<div class="t" style="left:243px;top:318px;width:62px;overflow:hidden;color:#FF0000;padding-left:5px">系统管理员</div>
<div class="t" style="left:306px;top:318px;width:70px;overflow:hidden;color:#FF0000;padding-left:5px">一部</div>
<div class="t" style="left:377px;top:318px;width:76px;overflow:hidden;color:#FF0000;padding-left:5px"></div>
<div class="t" style="left:454px;top:318px;width:60px;overflow:hidden;color:#FF0000;padding-left:4px"><span class="n">1250</span></div>
<div class="t" style="left:515px;top:318px;width:60px;overflow:hidden;color:#FF0000;padding-left:4px"><span class="n">20</span></div>
<div class="t" style="left:576px;top:318px;width:60px;overflow:hidden;color:#FF0000;padding-left:4px"><span class="n">136</span></div>
<div class="t" style="left:637px;top:318px;width:60px;overflow:hidden;color:#FF0000;padding-left:4px"><span class="n">25</span></div>
<div class="t" style="left:698px;top:318px;width:60px;overflow:hidden;color:#FF0000;padding-left:4px"><span class="n">1431</span></div>
<div class="t" style="left:1018px;top:318px;width:60px;overflow:hidden;color:#FF0000;padding-left:4px"><span class="n">1431</span></div>
<div class="t" style="left:1186px;top:318px;width:45px;overflow:hidden;color:#FF0000;padding-left:4px"><span class="n">2011</span></div>
<div class="t" style="left:12px;top:342px;width:50px;text-align:center;color:#FF0000"><span class="n">14</span></div>
<svg class="a" style="left:73px;top:341px" width="14" height="14" viewBox="0 0 15 15"><defs><radialGradient id="gcg" cx=".4" cy=".3" r=".8"><stop offset="0" stop-color="#D8D8D8"/><stop offset="1" stop-color="#888"/></radialGradient></defs><circle cx="7.5" cy="7.5" r="7" fill="url(#gcg)" stroke="#6A6A6A" stroke-width=".6"/><path d="M4 7.8 L6.5 10.3 L11 5.5" fill="none" stroke="#fff" stroke-width="2"/></svg>
<div class="t" style="left:97px;top:342px;width:51px;text-align:center;color:#FF0000">已审核</div>
<div class="t" style="left:149px;top:342px;width:52px;text-align:center;color:#FF0000"><span class="n">2011</span></div>
<div class="t" style="left:202px;top:342px;width:39px;text-align:center;color:#FF0000"><span class="n">3</span></div>
<div class="t" style="left:243px;top:342px;width:62px;overflow:hidden;color:#FF0000;padding-left:5px">马红薇</div>
<div class="t" style="left:306px;top:342px;width:70px;overflow:hidden;color:#FF0000;padding-left:5px">办公室</div>
<div class="t" style="left:377px;top:342px;width:76px;overflow:hidden;color:#FF0000;padding-left:5px">财务</div>
<div class="t" style="left:454px;top:342px;width:60px;overflow:hidden;color:#FF0000;padding-left:4px"><span class="n">500.26</span></div>
<div class="t" style="left:515px;top:342px;width:60px;overflow:hidden;color:#FF0000;padding-left:4px"><span class="n">650.2356</span></div>
<div class="t" style="left:576px;top:342px;width:60px;overflow:hidden;color:#FF0000;padding-left:4px"><span class="n">50</span></div>
<div class="t" style="left:637px;top:342px;width:60px;overflow:hidden;color:#FF0000;padding-left:4px"><span class="n">500</span></div>
<div class="t" style="left:698px;top:342px;width:60px;overflow:hidden;color:#FF0000;padding-left:4px"><span class="n">1700.5</span></div>
<div class="t" style="left:1018px;top:342px;width:60px;overflow:hidden;color:#FF0000;padding-left:4px"><span class="n">1700.5</span></div>
<div class="t" style="left:12px;top:366px;width:50px;text-align:center;color:#0000FF"><span class="n">15</span></div>
<svg class="a" style="left:73px;top:365px" width="14" height="14" viewBox="0 0 15 15"><defs><radialGradient id="gcg" cx=".4" cy=".3" r=".8"><stop offset="0" stop-color="#D8D8D8"/><stop offset="1" stop-color="#888"/></radialGradient></defs><circle cx="7.5" cy="7.5" r="7" fill="url(#gcg)" stroke="#6A6A6A" stroke-width=".6"/><path d="M4 7.8 L6.5 10.3 L11 5.5" fill="none" stroke="#fff" stroke-width="2"/></svg>
<div class="t" style="left:97px;top:366px;width:51px;text-align:center;color:#0000FF">未审核</div>
<div class="t" style="left:149px;top:366px;width:52px;text-align:center;color:#0000FF"><span class="n">2011</span></div>
<div class="t" style="left:202px;top:366px;width:39px;text-align:center;color:#0000FF"><span class="n">6</span></div>
<div class="t" style="left:243px;top:366px;width:62px;overflow:hidden;color:#0000FF;padding-left:5px">系统管理员</div>
<div class="t" style="left:306px;top:366px;width:70px;overflow:hidden;color:#0000FF;padding-left:5px">已审核</div>
<div class="t" style="left:377px;top:366px;width:76px;overflow:hidden;color:#0000FF;padding-left:5px"></div>
<div class="t" style="left:454px;top:366px;width:60px;overflow:hidden;color:#0000FF;padding-left:4px"><span class="n">1250</span></div>
<div class="t" style="left:515px;top:366px;width:60px;overflow:hidden;color:#0000FF;padding-left:4px"><span class="n">20</span></div>
<div class="t" style="left:576px;top:366px;width:60px;overflow:hidden;color:#0000FF;padding-left:4px"><span class="n">136</span></div>
<div class="t" style="left:698px;top:366px;width:60px;overflow:hidden;color:#0000FF;padding-left:4px"><span class="n">1406</span></div>
<div class="t" style="left:1018px;top:366px;width:60px;overflow:hidden;color:#0000FF;padding-left:4px"><span class="n">1406</span></div>
<div class="t" style="left:12px;top:390px;width:50px;text-align:center;color:#FF0000"><span class="n">16</span></div>
<svg class="a" style="left:73px;top:389px" width="14" height="14" viewBox="0 0 15 15"><defs><radialGradient id="gcg" cx=".4" cy=".3" r=".8"><stop offset="0" stop-color="#D8D8D8"/><stop offset="1" stop-color="#888"/></radialGradient></defs><circle cx="7.5" cy="7.5" r="7" fill="url(#gcg)" stroke="#6A6A6A" stroke-width=".6"/><path d="M4 7.8 L6.5 10.3 L11 5.5" fill="none" stroke="#fff" stroke-width="2"/></svg>
<div class="t" style="left:97px;top:390px;width:51px;text-align:center;color:#FF0000">已审核</div>
<div class="t" style="left:149px;top:390px;width:52px;text-align:center;color:#FF0000"><span class="n">2011</span></div>
<div class="t" style="left:202px;top:390px;width:39px;text-align:center;color:#FF0000"><span class="n">6</span></div>
<div class="t" style="left:243px;top:390px;width:62px;overflow:hidden;color:#FF0000;padding-left:5px">刘俊峰</div>
<div class="t" style="left:306px;top:390px;width:70px;overflow:hidden;color:#FF0000;padding-left:5px">销售部</div>
<div class="t" style="left:377px;top:390px;width:76px;overflow:hidden;color:#FF0000;padding-left:5px"></div>
<div class="t" style="left:698px;top:390px;width:60px;overflow:hidden;color:#FF0000;padding-left:4px"><span class="n">0</span></div>
<div class="t" style="left:1018px;top:390px;width:60px;overflow:hidden;color:#FF0000;padding-left:4px"><span class="n">0</span></div>
<div class="t" style="left:243px;top:601px;width:62px;text-align:center">合计：</div>
<div class="t" style="left:454px;top:601px;width:60px;overflow:hidden;padding-left:1px"><span class="n">1317853.26</span></div>
<div class="t" style="left:515px;top:601px;width:60px;overflow:hidden;padding-left:1px"><span class="n">4266.2356</span></div>
<div class="t" style="left:576px;top:601px;width:60px;overflow:hidden;padding-left:1px"><span class="n">3988</span></div>
<div class="t" style="left:637px;top:601px;width:60px;overflow:hidden;padding-left:1px"><span class="n">7469.506</span></div>
<div class="t" style="left:698px;top:601px;width:60px;overflow:hidden;padding-left:1px"><span class="n">1333577.01</span></div>
<div class="t" style="left:759px;top:601px;width:60px;overflow:hidden;padding-left:1px"><span class="n">263941.25</span></div>
<div class="t" style="left:820px;top:601px;width:60px;overflow:hidden;padding-left:1px"><span class="n">425.26</span></div>
<div class="t" style="left:881px;top:601px;width:60px;overflow:hidden;padding-left:1px"><span class="n">0</span></div>
<div class="t" style="left:942px;top:601px;width:75px;overflow:hidden;padding-left:1px"><span class="n">0</span></div>
<div class="t" style="left:1018px;top:601px;width:60px;overflow:hidden;padding-left:1px"><span class="n">1069210.5</span></div>
</div>
<div class="a" style="left:1422px;top:205px;width:18px;height:624px;background:linear-gradient(90deg,#EEEDE5,#F3F1EC 40%,#FDFDFA)"></div>
<div class="a" style="left:1423px;top:206px;width:16px;height:17px;border:1px solid #fff;border-radius:2px;background:linear-gradient(135deg,#E2EBFE,#B7CBFA);box-shadow:inset 0 0 0 1px #C6D6FC, 0 0 0 0 #fff"></div><svg class="a" style="left:1427px;top:211px" width="9" height="6"><path d="M1 5 L4.5 1.5 L8 5" fill="none" stroke="#4D6185" stroke-width="2"/></svg>
<div class="a" style="left:1423px;top:812px;width:16px;height:17px;border:1px solid #fff;border-radius:2px;background:linear-gradient(135deg,#E2EBFE,#B7CBFA);box-shadow:inset 0 0 0 1px #C6D6FC, 0 0 0 0 #fff"></div><svg class="a" style="left:1427px;top:817px" width="9" height="6"><path d="M1 1 L4.5 4.5 L8 1" fill="none" stroke="#4D6185" stroke-width="2"/></svg>
<div class="a" style="left:1423px;top:269px;width:16px;height:356px;border:1px solid #fff;border-radius:2px;background:linear-gradient(90deg,#C8D8FC,#BACDFB 50%,#A9BFF5);box-shadow:inset 0 0 0 1px #B0C6F6"></div>
<div class="a" style="left:1427px;top:441px;width:8px;height:9px;background:repeating-linear-gradient(180deg,#EEF3FE 0 1px,#8CA8E8 1px 2px)"></div>
<div class="a" style="left:209px;top:829px;width:1213px;height:17px;background:linear-gradient(180deg,#EEEDE5,#F3F1EC 40%,#FDFDFA)"></div>
<div class="a" style="left:210px;top:830px;width:16px;height:15px;border:1px solid #fff;border-radius:2px;background:linear-gradient(135deg,#E2EBFE,#B7CBFA);box-shadow:inset 0 0 0 1px #C6D6FC, 0 0 0 0 #fff"></div><svg class="a" style="left:215px;top:833px" width="6" height="9"><path d="M5 1 L1.5 4.5 L5 8" fill="none" stroke="#4D6185" stroke-width="2"/></svg>
<div class="a" style="left:1405px;top:830px;width:16px;height:15px;border:1px solid #fff;border-radius:2px;background:linear-gradient(135deg,#E2EBFE,#B7CBFA);box-shadow:inset 0 0 0 1px #C6D6FC, 0 0 0 0 #fff"></div><svg class="a" style="left:1411px;top:833px" width="6" height="9"><path d="M1 1 L4.5 4.5 L1 8" fill="none" stroke="#4D6185" stroke-width="2"/></svg>
<div class="a" style="left:227px;top:830px;width:17px;height:15px;border:1px solid #fff;border-radius:2px;background:linear-gradient(180deg,#C8D8FC,#BACDFB 50%,#A9BFF5)"></div>
<div class="a" style="left:231px;top:834px;width:9px;height:8px;background:repeating-linear-gradient(90deg,#EEF3FE 0 1px,#8CA8E8 1px 2px)"></div>
<div class="a" style="left:1422px;top:829px;width:18px;height:17px;background:#ECE9D8"></div>
<div class="a" style="left:1422px;top:205px;width:17px;height:1px;background:#8C8C8C"></div>
<div class="a" style="left:1438px;top:205px;width:1px;height:624px;background:#D8D8D0"></div>
<div class="a" style="left:0px;top:849px;width:200px;height:20px;border:1px solid;border-color:#ACA899 #fff #fff #ACA899"></div><div class="t" style="left:14px;top:852px">欢迎使用红管家财务出纳记帐系统</div>
<div class="a" style="left:202px;top:849px;width:148px;height:20px;border:1px solid;border-color:#ACA899 #fff #fff #ACA899"></div><div class="t" style="left:215px;top:852px">当前用户：系统管理员</div>
<div class="a" style="left:352px;top:849px;width:118px;height:20px;border:1px solid;border-color:#ACA899 #fff #fff #ACA899"></div><div class="t" style="left:368px;top:852px"><span class="n">2011</span>年<span class="n">03</span>月<span class="n">09</span>日</div>
<div class="a" style="left:472px;top:849px;width:218px;height:20px;border:1px solid;border-color:#ACA899 #fff #fff #ACA899"></div><div class="t" style="left:479px;top:852px">帐套名称：出纳记账帐套<span class="n">(FMSDB2010)</span></div>
<div class="a" style="left:692px;top:849px;width:748px;height:20px;border:1px solid;border-color:#ACA899 #fff #fff #ACA899"></div><div class="t" style="left:700px;top:852px">授权许可方式：注册码版</div>
<div class="t" style="left:838px;top:852px">授权给：亚拓软件</div>
<div class="a" style="left:0;top:870px;width:1440px;height:4px;background:linear-gradient(180deg,#3A80F0,#2A64E0)"></div>
<div class="a" style="left:0;top:870px;width:93px;height:4px;background:linear-gradient(180deg,#5AA85A,#3A8A3A);border-radius:0 8px 0 0"></div>
<div class="a" style="left:1292px;top:870px;width:148px;height:4px;background:linear-gradient(180deg,#30B0F0,#1A98E8)"></div>
</body></html>
